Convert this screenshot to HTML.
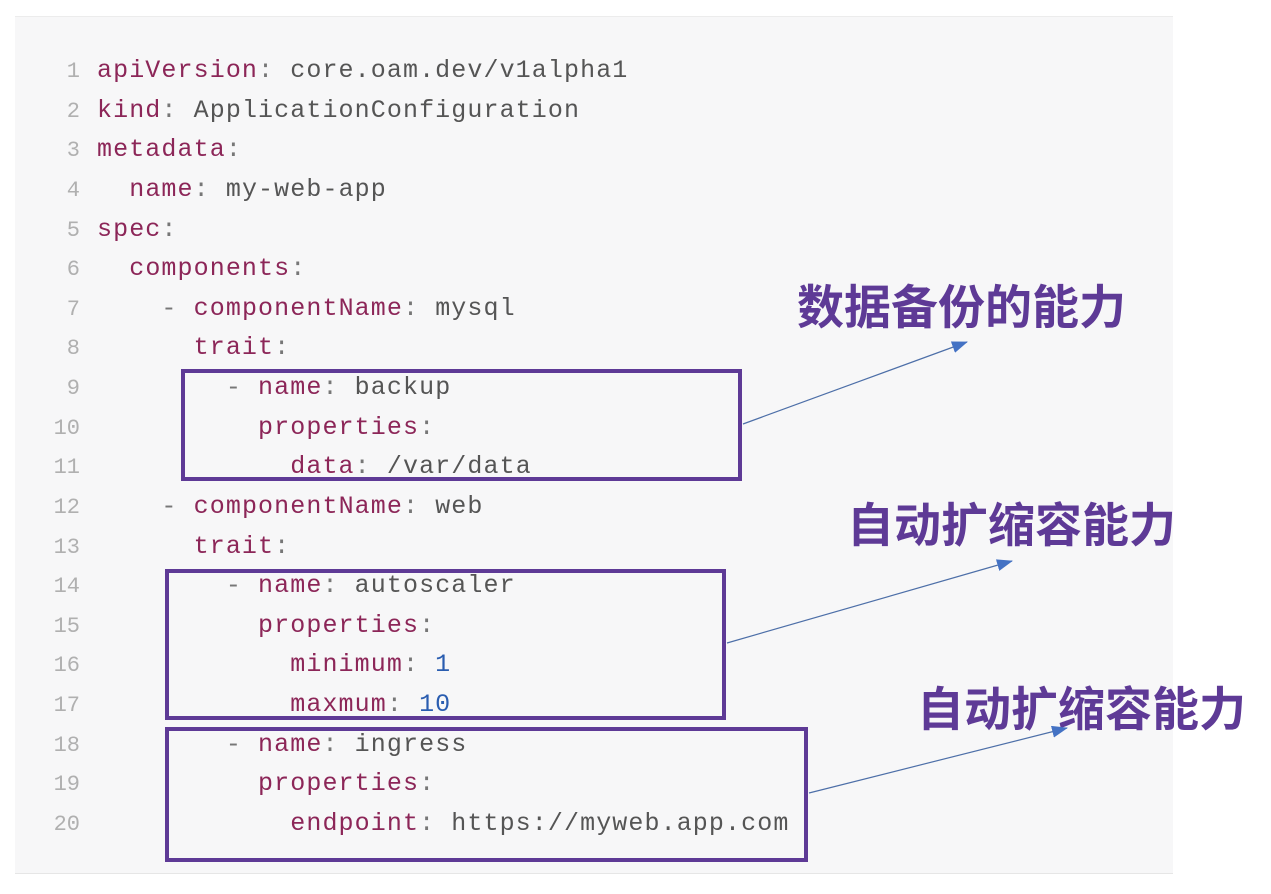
<!DOCTYPE html>
<html><head><meta charset="utf-8"><style>
html,body{margin:0;padding:0;background:#fff;width:1271px;height:894px;overflow:hidden;position:relative}
.panel{position:absolute;left:15px;top:16px;width:1158px;height:856px;background:#f7f7f8;border-top:1px solid #ececec;border-bottom:1px solid #e6e6e6}
.ln{position:absolute;left:30px;width:50px;text-align:right;font:22px "Liberation Mono",monospace;color:#b0b0b0}
.code{position:absolute;left:97px;font:25px "Liberation Mono",monospace;letter-spacing:1.1px;color:#555;white-space:pre}
.k{color:#8c2658}.n{color:#2a5db0}.p{color:#777}
.box{position:absolute;border:4px solid #5e3a96;box-sizing:border-box}
.lab{position:absolute;font:bold 47px "Noto Sans CJK SC",sans-serif;color:#5e3a96;white-space:nowrap;line-height:1}
</style></head><body>
<div class="panel"></div>
<div id="c"></div>
<script>
var L=[["<span class=k>apiVersion</span><span class=p>:</span> core.oam.dev/v1alpha1"],
["<span class=k>kind</span><span class=p>:</span> ApplicationConfiguration"],
["<span class=k>metadata</span><span class=p>:</span>"],
["  <span class=k>name</span><span class=p>:</span> my-web-app"],
["<span class=k>spec</span><span class=p>:</span>"],
["  <span class=k>components</span><span class=p>:</span>"],
["    <span class=p>-</span> <span class=k>componentName</span><span class=p>:</span> mysql"],
["      <span class=k>trait</span><span class=p>:</span>"],
["        <span class=p>-</span> <span class=k>name</span><span class=p>:</span> backup"],
["          <span class=k>properties</span><span class=p>:</span>"],
["            <span class=k>data</span><span class=p>:</span> /var/data"],
["    <span class=p>-</span> <span class=k>componentName</span><span class=p>:</span> web"],
["      <span class=k>trait</span><span class=p>:</span>"],
["        <span class=p>-</span> <span class=k>name</span><span class=p>:</span> autoscaler"],
["          <span class=k>properties</span><span class=p>:</span>"],
["            <span class=k>minimum</span><span class=p>:</span> <span class=n>1</span>"],
["            <span class=k>maxmum</span><span class=p>:</span> <span class=n>10</span>"],
["        <span class=p>-</span> <span class=k>name</span><span class=p>:</span> ingress"],
["          <span class=k>properties</span><span class=p>:</span>"],
["            <span class=k>endpoint</span><span class=p>:</span> https://myweb.app.com"]];
var h="";for(var i=0;i<L.length;i++){var y=69+i*39.63-14;
h+='<div class="ln" style="top:'+(y+4)+'px">'+(i+1)+'</div><div class="code" style="top:'+(y+1)+'px">'+L[i][0]+'</div>';}
document.getElementById("c").innerHTML=h;
</script>
<div class="box" style="left:181px;top:369px;width:561px;height:112px"></div>
<div class="box" style="left:165px;top:569px;width:561px;height:151px"></div>
<div class="box" style="left:165px;top:727px;width:643px;height:135px"></div>
<div class="lab" style="left:797px;top:280px">数据备份的能力</div>
<div class="lab" style="left:847px;top:498px">自动扩缩容能力</div>
<div class="lab" style="left:917px;top:682px">自动扩缩容能力</div>
<svg width="1271" height="894" style="position:absolute;left:0;top:0">
<defs><marker id="b" markerWidth="16" markerHeight="12" refX="15" refY="6" orient="auto" markerUnits="userSpaceOnUse"><path d="M0,0 L16,6 L0,12Z" fill="#4472c4"/></marker></defs>
<line x1="743" y1="424" x2="967" y2="342" stroke="#4d6fa8" stroke-width="1.2" marker-end="url(#b)"/>
<line x1="727" y1="643" x2="1012" y2="561" stroke="#4d6fa8" stroke-width="1.2" marker-end="url(#b)"/>
<line x1="809" y1="793" x2="1067" y2="728" stroke="#4d6fa8" stroke-width="1.2" marker-end="url(#b)"/>
</svg>
</body></html>
